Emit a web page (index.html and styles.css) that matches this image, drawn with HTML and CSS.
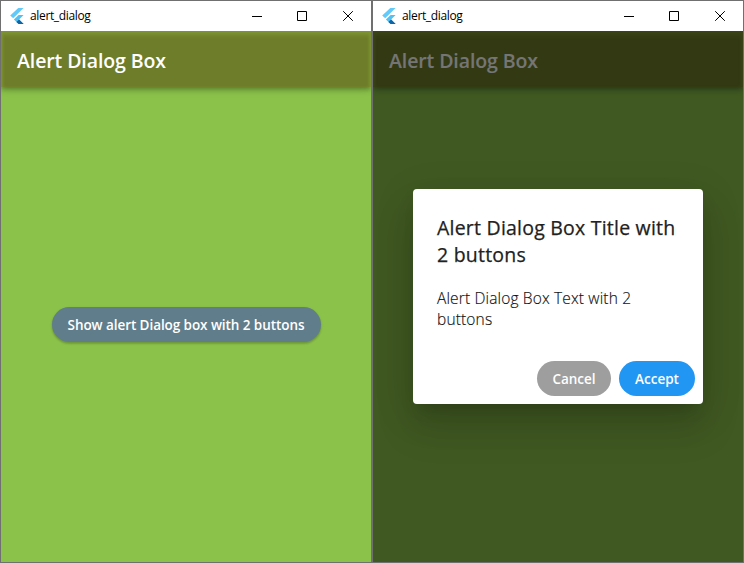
FILE: index.html
```html
<!DOCTYPE html>
<html lang="en">
<head>
<meta charset="utf-8">
<title>alert_dialog</title>
<link rel="stylesheet" href="styles.css">
</head>
<body>
<svg width="0" height="0" class="defs">
  <symbol id="logo" viewBox="0 0 14 16">
    <path d="M8.3 0H13.6L3.2 10.2L0.2 7.6Z" fill="#62c9f8"/>
    <path d="M8.6 7H13.6L9.1 11.4L13.6 16H8.6L3.9 11.4Z" fill="#54c0f2"/>
    <path d="M6.4 13.9L9.1 11.4L13.6 16H8.6Z" fill="#0b65a8"/>
  </symbol>
  <symbol id="controls" viewBox="0 0 102 10">
    <g fill="none" stroke="#000">
      <path d="M0 5.5H10M45.5 .5H54.5V9.5H45.5ZM91.2 .2L100.8 9.8M100.8 .2L91.2 9.8"/>
    </g>
  </symbol>
</svg>
<main class="screens">
  <section class="window">
    <header class="titlebar"><svg class="logo"><use href="#logo"/></svg><span class="name">alert_dialog</span><svg class="controls"><use href="#controls"/></svg></header>
    <div class="client">
      <div class="appbar"><h1>Alert Dialog Box</h1></div>
      <div class="content"><button class="pill show">Show alert Dialog box with 2 buttons</button></div>
    </div>
  </section>
  <section class="window">
    <header class="titlebar"><svg class="logo"><use href="#logo"/></svg><span class="name">alert_dialog</span><svg class="controls"><use href="#controls"/></svg></header>
    <div class="client">
      <div class="appbar"><h1>Alert Dialog Box</h1></div>
      <div class="overlay">
        <div class="dialog" role="dialog">
          <h2>Alert Dialog Box Title with<br>2 buttons</h2>
          <p>Alert Dialog Box Text with 2<br>buttons</p>
          <div class="actions"><button class="pill cancel">Cancel</button><button class="pill accept">Accept</button></div>
        </div>
      </div>
    </div>
  </section>
</main>
</body>
</html>
```
FILE: styles.css
```css
* { box-sizing: border-box; }
body { margin: 0; font-family: "Open Sans", "Noto Sans", sans-serif; }
.defs { position: absolute; }
.screens { display: grid; grid-template-columns: 372px 372px; height: 563px; }
.window { display: flex; flex-direction: column; border: 1px solid #707070; overflow: hidden; }
.titlebar { display: flex; align-items: center; height: 30px; flex: none; padding: 0 17px 0 9px; background: #fff; }
.logo { width: 14px; height: 16px; margin: -1px 6px 0 0; }
.name { flex: 1; font-size: 12px; line-height: 16px; letter-spacing: -0.35px; color: #000; }
.controls { width: 102px; height: 10px; margin-top: -1px; }
.client { position: relative; flex: 1; display: flex; flex-direction: column; background: #8bc34a; overflow: hidden; }
.appbar {
  height: 56px; flex: none; display: flex; align-items: center; padding: 0 16px;
  background: #6e7d2a;
  box-shadow: 0 2px 4px -1px rgba(0,0,0,.2), 0 4px 5px rgba(0,0,0,.14), 0 1px 10px rgba(0,0,0,.12), inset 0 6px 4px -2px #7e9431, inset 3px 0 3px -1px #7e9431, inset -3px 0 3px -1px #7e9431;
}
h1, h2, p { margin: 0; }
h1 { font-size: 19.5px; font-weight: 600; line-height: 26px; letter-spacing: -0.1px; color: #fff; margin-top: 3px; white-space: nowrap; }
.content { flex: 1; display: flex; align-items: center; justify-content: center; }
.pill { height: 35px; border: 0; border-radius: 18px; padding: 2px 0 0; color: #fff; font: 600 13.5px/33px "Open Sans", "Noto Sans", sans-serif; white-space: nowrap; }
.show { width: 269px; background: #607d8b; letter-spacing: -0.07px; box-shadow: 0 2px 2px rgba(0,0,0,.14), 0 1px 3px rgba(0,0,0,.12); }
.overlay { position: absolute; inset: 0; display: flex; align-items: center; justify-content: center; background: rgba(0,0,0,.54); }
.dialog {
  width: 290px; height: 215px; padding: 25px 8px 8px 24px; display: flex; flex-direction: column;
  background: #fff; border-radius: 4px;
  box-shadow: 0 11px 15px -7px rgba(0,0,0,.15), 0 24px 38px 3px rgba(0,0,0,.11), 0 9px 40px 4px rgba(0,0,0,.09);
}
h2 { font-size: 19.5px; font-weight: 400; line-height: 27px; letter-spacing: 0.22px; color: #212121; -webkit-text-stroke: 0.25px #212121; white-space: nowrap; }
p { margin-top: 20px; font-size: 15.5px; font-weight: 300; line-height: 21px; letter-spacing: 0.15px; color: #111; -webkit-text-stroke: 0.15px #111; white-space: nowrap; }
.actions { margin-top: auto; display: flex; gap: 8px; justify-content: flex-end; }
.cancel { width: 74px; background: #9e9e9e; }
.accept { width: 76px; background: #2196f3; }
```
